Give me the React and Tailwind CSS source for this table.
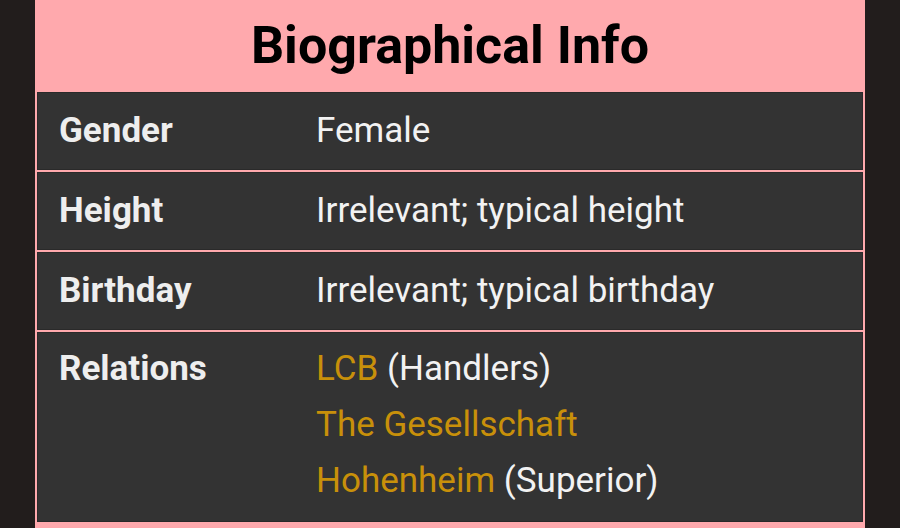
import React from "react";

const rows = [
  { label: "Gender", value: [{ text: "Female" }] },
  { label: "Height", value: [{ text: "Irrelevant; typical height" }] },
  { label: "Birthday", value: [{ text: "Irrelevant; typical birthday" }] },
];

const relations = [
  { link: "LCB", note: "(Handlers)" },
  { link: "The Gesellschaft" },
  { link: "Hohenheim", note: "(Superior)" },
];

const App = () => {
  return (
    <div
      className="w-[900px] h-[528px] overflow-hidden bg-[#221d1c] flex justify-center"
      style={{ fontFamily: "Roboto, 'Noto Sans', sans-serif" }}
    >
      <div className="w-[830px] bg-[#ffa9ad] px-[2px] pb-[2px] h-fit">
        <div className="h-[92px] flex items-center justify-center">
          <h2 className="text-[52px] font-bold text-black leading-none">
            Biographical Info
          </h2>
        </div>
        <div className="flex flex-col gap-[2px]">
          {rows.map((r) => (
            <div
              key={r.label}
              className="flex bg-[#333333] border border-[#2a2a2a] h-[78px] items-center"
            >
              <div className="w-[278px] pl-[21px] text-[35px] font-bold text-[#eeeeee]">
                {r.label}
              </div>
              <div className="text-[35px] text-[#f2f2f2]">{r.value[0].text}</div>
            </div>
          ))}
          <div className="flex bg-[#333333] border border-[#2a2a2a] pt-[16px] pb-[20px]">
            <div className="w-[278px] pl-[21px] text-[35px] font-bold text-[#eeeeee] leading-[40px]">
              Relations
            </div>
            <div className="flex flex-col gap-[16px] text-[35px] leading-[40px]">
              {relations.map((r) => (
                <div key={r.link}>
                  <span className="text-[#c8900a]">{r.link}</span>
                  {r.note && <span className="text-[#f2f2f2]"> {r.note}</span>}
                </div>
              ))}
            </div>
          </div>
          <div className="h-[10px]" />
        </div>
      </div>
    </div>
  );
};

export default App;
